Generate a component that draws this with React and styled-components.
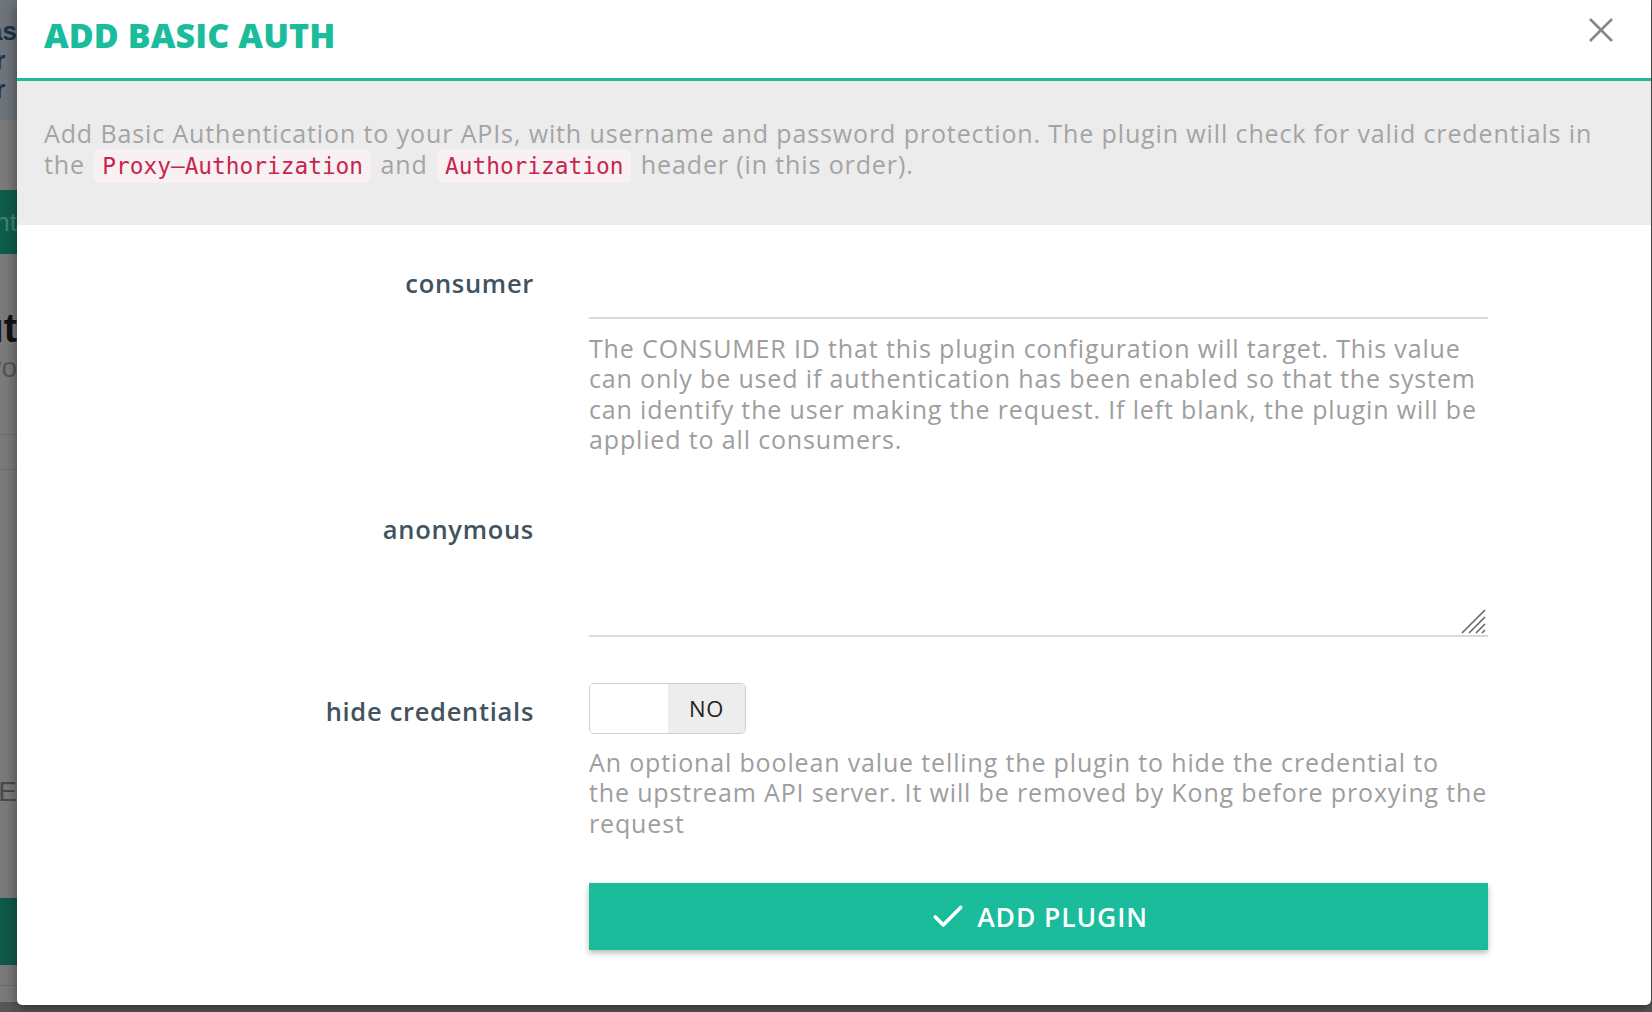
import React from 'react'
import styled, { createGlobalStyle } from 'styled-components'
import { Check } from 'lucide-react'

const GlobalStyle = createGlobalStyle`
  html, body { margin: 0; padding: 0; }
  body {
    width: 1652px;
    height: 1012px;
    overflow: hidden;
    background: #555;
    font-family: "Open Sans", "Liberation Sans", sans-serif;
  }
`

const Screen = styled.div`
  display: flex;
  align-items: flex-start;
  width: 1652px;
  height: 1012px;
  background: #575757;
`

/* sliver of the page that sits behind the modal backdrop */
const Behind = styled.div`
  width: 17px;
  height: 1002px;
  flex-shrink: 0;
  overflow: hidden;
  display: flex;
  flex-direction: column;
  background: #7a7a7a;
`

const BehindBand = styled.div`
  height: ${({ h }) => h}px;
  flex-shrink: 0;
  display: flex;
  align-items: center;
  justify-content: flex-end;
  background: ${({ bg }) => bg || 'transparent'};
  border-bottom: ${({ line }) => (line ? '1px solid #6c6c6c' : 'none')};
  color: ${({ color }) => color || '#333'};
  font-family: "Liberation Sans", sans-serif;
  font-size: ${({ size }) => size || 24}px;
  font-weight: ${({ bold }) => (bold ? 700 : 400)};
  white-space: nowrap;
`

const Modal = styled.div`
  width: 1634px;
  height: 1005px;
  flex-shrink: 0;
  background: #fff;
  border-radius: 0 0 5px 5px;
  box-shadow: 0 4px 14px rgba(0, 0, 0, 0.45);
  display: flex;
  flex-direction: column;
`

const Header = styled.div`
  height: 81px;
  box-sizing: border-box;
  border-bottom: 3px solid #1abc9c;
  display: flex;
  align-items: center;
  justify-content: space-between;
  padding: 0 37px 8px 27px;
`

const Title = styled.h1`
  margin: 0;
  color: #1abc9c;
  font-family: "Open Sans", sans-serif;
  font-size: 34px;
  font-weight: 800;
  letter-spacing: 0.1px;
`

const Close = styled.button`
  border: none;
  background: transparent;
  padding: 0;
  margin-bottom: 10px;
  width: 26px;
  height: 26px;
  display: flex;
  cursor: pointer;
`

const Intro = styled.div`
  background: #ececec;
  padding: 37px 27px 43px 27px;
  font-size: 25px;
  line-height: 31px;
  letter-spacing: 0.88px;
  color: #a4a4a4;
  white-space: nowrap;
`

const Code = styled.code`
  font-family: "DejaVu Sans Mono", "Liberation Mono", monospace;
  font-size: 22.8px;
  letter-spacing: 0;
  color: #c7254e;
  background: #f8f1f3;
  border-radius: 6px;
  padding: 4px 8px;
  margin: 0 2px;
`

const Form = styled.div`
  padding: 24px 0 55px 0;
  display: flex;
  flex-direction: column;
  gap: 40px;
`

const Row = styled.div`
  display: grid;
  grid-template-columns: 517px 899px;
  column-gap: 55px;
`

const Label = styled.label`
  text-align: right;
  padding-top: 17px;
  font-size: 25.5px;
  line-height: 34px;
  font-weight: 600;
  letter-spacing: 0.7px;
  color: #41535f;
`

const Field = styled.div`
  position: relative;
  display: flex;
  flex-direction: column;
`

const Input = styled.input`
  height: 68px;
  border: none;
  border-bottom: 2px solid #dadada;
  outline: none;
  padding: 0;
  font-size: 22px;
  font-family: inherit;
`

const TextArea = styled.textarea`
  height: 140px;
  border: none;
  border-bottom: 2px solid #dadada;
  outline: none;
  padding: 0;
  resize: none;
  font-size: 22px;
  font-family: inherit;
  display: block;
`

const Grip = styled.svg`
  position: absolute;
  right: 2px;
  bottom: 3px;
  pointer-events: none;
`

const Help = styled.p`
  margin: ${({ gap }) => gap}px 0 0 0;
  font-size: 25px;
  line-height: 30.5px;
  letter-spacing: 0.85px;
  color: #9e9e9e;
  white-space: nowrap;
`

const Toggle = styled.div`
  margin-top: 6px;
  width: 157px;
  height: 51px;
  box-sizing: border-box;
  border: 1px solid #cfcfcf;
  border-radius: 5px;
  overflow: hidden;
  display: grid;
  grid-template-columns: 78px 1fr;
`

const ToggleSide = styled.span`
  display: flex;
  align-items: center;
  justify-content: center;
  background: ${({ off }) => (off ? '#ededed' : '#fff')};
  color: #222;
  font-size: 22px;
  letter-spacing: 0.6px;
`

const SubmitButton = styled.button`
  margin-top: 45px;
  height: 67px;
  border: none;
  background: #1abc9c;
  color: #fff;
  box-shadow: 0 3px 6px rgba(0, 0, 0, 0.28);
  display: flex;
  align-items: center;
  justify-content: center;
  gap: 10px;
  font-family: "Open Sans", sans-serif;
  font-size: 26.5px;
  font-weight: 600;
  letter-spacing: 0.9px;
  cursor: pointer;
`

const CloseIcon = () => (
  <svg width="26" height="26" viewBox="0 0 26 26">
    <path d="M2 2 L24 24 M24 2 L2 24" stroke="#878787" strokeWidth="2.6" fill="none" />
  </svg>
)

const App = () => {
  return (
    <>
      <GlobalStyle />
      <Screen>
        <Behind>
          <BehindBand h={120} bg="#6e747a" color="#1e3146" bold size={26}>
            <span style={{ lineHeight: '29px', textAlign: 'left' }}>
              has<br />n r<br />n r
            </span>
          </BehindBand>
          <BehindBand h={70} />
          <BehindBand h={64} bg="#0f5d4c" color="#3f8474" size={26}>nt</BehindBand>
          <BehindBand h={56} />
          <BehindBand h={36} color="#111" bold size={40}>ut</BehindBand>
          <BehindBand h={44} color="#555" size={28}>yo</BehindBand>
          <BehindBand h={44} line />
          <BehindBand h={34} line />
          <BehindBand h={302} />
          <BehindBand h={40} color="#4a4a4a" size={28}>E</BehindBand>
          <BehindBand h={86} />
          <BehindBand h={67} bg="#0e5a4a" />
          <BehindBand h={20} line />
        </Behind>

        <Modal>
          <Header>
            <Title>ADD BASIC AUTH</Title>
            <Close aria-label="Close">
              <CloseIcon />
            </Close>
          </Header>

          <Intro>
            Add Basic Authentication to your APIs, with username and password protection. The plugin will
            check for valid credentials in
            <br />
            the <Code>Proxy–Authorization</Code> and <Code>Authorization</Code> header (in this order).
          </Intro>

          <Form>
            <Row>
              <Label>consumer</Label>
              <Field>
                <Input type="text" />
                <Help gap={14}>
                  The CONSUMER ID that this plugin configuration will target. This value
                  <br />
                  can only be used if authentication has been enabled so that the system
                  <br />
                  can identify the user making the request. If left blank, the plugin will be
                  <br />
                  applied to all consumers.
                </Help>
              </Field>
            </Row>

            <Row>
              <Label>anonymous</Label>
              <Field>
                <TextArea />
                <Grip width="26" height="26" viewBox="0 0 26 26">
                  <path
                    d="M2 25 L25 2 M9 25 L25 9 M16 25 L25 16 M22 25 L25 22"
                    stroke="#6a6a6a"
                    strokeWidth="1.7"
                    fill="none"
                  />
                </Grip>
              </Field>
            </Row>

            <Row>
              <Label>hide credentials</Label>
              <Field>
                <Toggle>
                  <ToggleSide />
                  <ToggleSide off>NO</ToggleSide>
                </Toggle>
                <Help gap={13}>
                  An optional boolean value telling the plugin to hide the credential to
                  <br />
                  the upstream API server. It will be removed by Kong before proxying the
                  <br />
                  request
                </Help>
                <SubmitButton>
                  <Check size={38} strokeWidth={2.3} />
                  ADD PLUGIN
                </SubmitButton>
              </Field>
            </Row>
          </Form>
        </Modal>
      </Screen>
    </>
  )
}

export default App
